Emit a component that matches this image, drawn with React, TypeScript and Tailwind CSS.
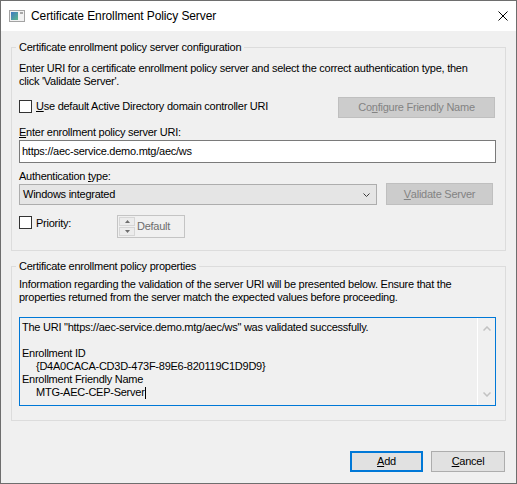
import React from "react";

function Checkbox({ className = "" }: { className?: string }) {
  return <div className={"w-[13px] h-[13px] border border-[#333333] bg-white shrink-0 " + className} />;
}

function U({ children }: { children: React.ReactNode }) {
  return <span className="underline underline-offset-[1px]">{children}</span>;
}

export default function App() {
  return (
    <div className="w-[517px] h-[484px] border border-[#6e6e6e] bg-[#f0f0f0] flex flex-col overflow-hidden text-[11px] leading-[13px] text-black font-['Liberation_Sans',Arial,sans-serif] tracking-[-0.25px]">
      {/* Title bar */}
      <div className="h-[30px] bg-white flex items-center pl-[8px] pr-[8px] shrink-0">
        <svg width="16" height="12" viewBox="0 0 16 12" className="shrink-0">
          <defs>
            <linearGradient id="ig" x1="0" y1="0" x2="1" y2="1">
              <stop offset="0" stopColor="#3d78c4" />
              <stop offset="1" stopColor="#5cb88a" />
            </linearGradient>
          </defs>
          <rect x="0.5" y="0.5" width="15" height="11" fill="#f2f2f2" stroke="#a3a3a3" />
          <rect x="2" y="2" width="7" height="8" fill="url(#ig)" />
          <rect x="11" y="2" width="3" height="2" fill="#a8a8a8" />
        </svg>
        <span className="ml-[6px] text-[12px] tracking-[-0.1px]">Certificate Enrollment Policy Server</span>
        <svg className="ml-auto shrink-0" width="10" height="10" viewBox="0 0 10 10">
          <path d="M0.5 0.5 L9.5 9.5 M9.5 0.5 L0.5 9.5" stroke="#000" strokeWidth="1" fill="none" />
        </svg>
      </div>

      {/* Body */}
      <div className="flex-1 px-[10px] pt-[9px] flex flex-col">
        {/* Group 1 */}
        <fieldset className="border border-[#dcdcdc] p-0 m-0 min-w-0">
          <legend className="ml-[4px] px-[3px] leading-[15px]">Certificate enrollment policy server configuration</legend>
          <div className="pl-[7px] pr-[9px] pt-[7px] pb-[12px] flex flex-col">
            <div className="whitespace-nowrap">
              Enter URI for a certificate enrollment policy server and select the correct authentication type, then
            </div>
            <div className="whitespace-nowrap">click 'Validate Server'.</div>

            <div className="mt-[9px] h-[21px] flex items-start">
              <Checkbox className="mt-[3px]" />
              <span className="ml-[4px] mt-[3px] whitespace-nowrap">
                <U>U</U>se default Active Directory domain controller URI
              </span>
              <div className="ml-auto mr-[1px] w-[157px] h-[21px] bg-[#cccccc] border border-[#bfbfbf] text-[#838383] flex items-center justify-center whitespace-nowrap">
                Co<U>n</U>figure Friendly Name
              </div>
            </div>

            <div className="mt-[8px] whitespace-nowrap">
              <U>E</U>nter enrollment policy server URI:
            </div>
            <div className="mt-[1px] h-[23px] bg-white border border-[#7a7a7a] flex items-center pl-[2px] whitespace-nowrap">
              https://aec-service.demo.mtg/aec/ws
            </div>

            <div className="mt-[7px] whitespace-nowrap">
              Authentication <U>t</U>ype:
            </div>
            <div className="flex items-start">
              <div className="mt-[1px] w-[358px] h-[21px] bg-[#e5e5e5] border border-[#adadad] flex items-center pl-[3px] pr-[6px] whitespace-nowrap">
                <span>Windows integrated</span>
                <svg className="ml-auto" width="7" height="4" viewBox="0 0 7 4">
                  <path d="M0.5 0.5 L3.5 3.5 L6.5 0.5" stroke="#3a3a3a" strokeWidth="1" fill="none" />
                </svg>
              </div>
              <div className="ml-[9px] w-[107px] h-[22px] bg-[#cccccc] border border-[#bfbfbf] text-[#838383] flex items-center justify-center whitespace-nowrap">
                <U>V</U>alidate Server
              </div>
            </div>

            <div className="mt-[10px] flex items-start">
              <Checkbox className="mt-[1px]" />
              <span className="ml-[4px] mt-[2px] w-[81px] whitespace-nowrap">Priority:</span>
              <div className="w-[68px] h-[23px] border border-[#c4c4c4] bg-[#f0f0f0] flex items-stretch p-[1px]">
                <div className="w-[16px] flex flex-col gap-[1px]">
                  <div className="flex-1 border border-[#d6d6d6] bg-[#ececec] flex items-center justify-center">
                    <svg width="5" height="3" viewBox="0 0 5 3">
                      <path d="M0 3 L2.5 0 L5 3 Z" fill="#6e6e6e" />
                    </svg>
                  </div>
                  <div className="flex-1 border border-[#d6d6d6] bg-[#ececec] flex items-center justify-center">
                    <svg width="5" height="3" viewBox="0 0 5 3">
                      <path d="M0 0 L5 0 L2.5 3 Z" fill="#6e6e6e" />
                    </svg>
                  </div>
                </div>
                <span className="ml-[2px] self-center text-[#6d6d6d] whitespace-nowrap">Default</span>
              </div>
            </div>
          </div>
        </fieldset>

        {/* Group 2 */}
        <fieldset className="mt-[8px] border border-[#dcdcdc] p-0 m-0 min-w-0">
          <legend className="ml-[4px] px-[3px] leading-[15px]">Certificate enrollment policy properties</legend>
          <div className="pl-[7px] pr-[9px] pt-[4px] pb-[14px] flex flex-col">
            <div className="whitespace-nowrap">
              Information regarding the validation of the server URI will be presented below. Ensure that the
            </div>
            <div className="whitespace-nowrap">
              properties returned from the server match the expected values before proceeding.
            </div>
            <div className="mt-[13px] h-[89px] border border-[#0078d7] bg-[#f0f0f0] flex">
              <div className="flex-1 pl-[2px] pt-[3px] flex flex-col whitespace-nowrap">
                <div>The URI "https://aec-service.demo.mtg/aec/ws" was validated successfully.</div>
                <div className="h-[13px]" />
                <div>Enrollment ID</div>
                <div className="pl-[14px]">{"{D4A0CACA-CD3D-473F-89E6-820119C1D9D9}"}</div>
                <div>Enrollment Friendly Name</div>
                <div className="pl-[14px] flex items-center">
                  <span>MTG-AEC-CEP-Server</span>
                  <span className="inline-block w-[1px] h-[12px] bg-black" />
                </div>
              </div>
              <div className="w-[18px] border-l border-white flex flex-col items-center justify-between py-[8px]">
                <svg width="8" height="5" viewBox="0 0 8 5">
                  <path d="M0.5 4.5 L4 1 L7.5 4.5" stroke="#c2c2c2" strokeWidth="1.5" fill="none" />
                </svg>
                <svg width="8" height="5" viewBox="0 0 8 5">
                  <path d="M0.5 0.5 L4 4 L7.5 0.5" stroke="#c2c2c2" strokeWidth="1.5" fill="none" />
                </svg>
              </div>
            </div>
          </div>
        </fieldset>

        {/* Buttons */}
        <div className="mt-[30px] mr-[1px] flex justify-end gap-[8px]">
          <div className="w-[73px] h-[21px] bg-[#e1e1e1] border-2 border-[#0078d7] flex items-center justify-center">
            <span>
              <U>A</U>dd
            </span>
          </div>
          <div className="w-[74px] h-[21px] bg-[#e1e1e1] border border-[#adadad] flex items-center justify-center">
            <span>
              <U>C</U>ancel
            </span>
          </div>
        </div>
      </div>
    </div>
  );
}
